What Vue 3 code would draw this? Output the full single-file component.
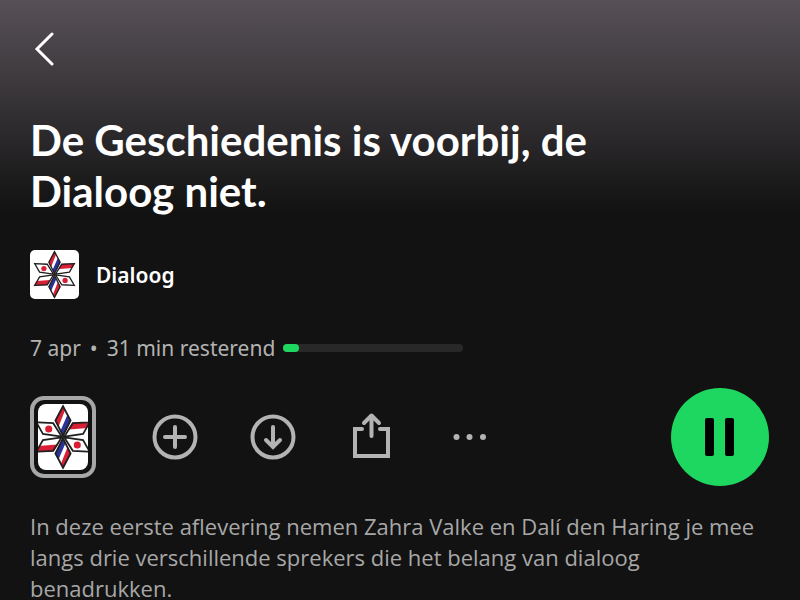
<script setup>
import { ref } from 'vue'

const playing = ref(true)
const progress = ref(9)
</script>

<template>
  <main class="episode">
    <svg class="sprites" aria-hidden="true">
      <defs>
        <clipPath id="petal-top"><path d="M74 3L92 37L74 72L56 37Z" /></clipPath>
        <clipPath id="petal-side"><path d="M136 40L95 42L76 73L119 67Z" /></clipPath>
        <g id="petals">
          <g clip-path="url(#petal-top)">
            <path fill="#fff" d="M50 0H100V80H50Z" />
            <path fill="#d91f35" d="M50 0H84L62 56H50Z" />
            <path fill="#29329b" d="M91 8L65 68V80H100V8Z" />
          </g>
          <g clip-path="url(#petal-side)">
            <path fill="#fff" d="M70 35H140V80H70Z" />
            <path fill="#d91f35" d="M80 35H140V53L80 58Z" />
          </g>
          <g class="outline">
            <path d="M74 5L91 37L74 71L57 37Z" />
            <path d="M134 41L96 43L77 73L119 67Z" />
            <path d="M14 41L52 43L71 73L29 67Z" />
          </g>
          <circle cx="42" cy="56" r="8" fill="#d91f35" />
        </g>
        <symbol id="star" viewBox="0 0 148 148">
          <use href="#petals" />
          <use href="#petals" transform="rotate(180 74 74)" />
        </symbol>
      </defs>
    </svg>

    <button class="back" aria-label="Terug">
      <svg width="20" height="34" viewBox="0 0 20 34">
        <path d="M18 2L3 17L18 32" />
      </svg>
    </button>

    <h1 class="title">De Geschiedenis is voorbij, de Dialoog niet.</h1>

    <a class="show" href="#">
      <svg class="cover"><use href="#star" /></svg>
      <span>Dialoog</span>
    </a>

    <div class="meta">
      <span>7 apr</span>
      <span class="dot">•</span>
      <span>31 min resterend</span>
      <div class="track">
        <div class="bar" :style="{ width: progress + '%' }"></div>
      </div>
    </div>

    <div class="actions">
      <button class="preview" aria-label="Voorbeeld">
        <svg viewBox="12 0 124 148" preserveAspectRatio="xMidYMid slice"><use href="#star" width="148" height="148" /></svg>
      </button>
      <button aria-label="Toevoegen">
        <svg class="icon" width="46" height="46" viewBox="0 0 46 46">
          <circle cx="23" cy="23" r="20.5" />
          <path d="M23 13V33M13 23H33" />
        </svg>
      </button>
      <button aria-label="Downloaden">
        <svg class="icon" width="46" height="46" viewBox="0 0 46 46">
          <circle cx="23" cy="23" r="20.5" />
          <path d="M23 13V33M16 26L23 33L30 26" />
        </svg>
      </button>
      <button aria-label="Delen">
        <svg class="icon share" width="46" height="46" viewBox="0 0 46 46">
          <path d="M14 15H7V42H40V15H32" />
          <path class="arrow" d="M23.5 22V2M16 9L23.5 1.5L31 9" />
        </svg>
      </button>
      <button aria-label="Meer">
        <svg class="more" width="46" height="46" viewBox="0 0 46 46">
          <circle cx="10.5" cy="23" r="3" />
          <circle cx="23.5" cy="23" r="3" />
          <circle cx="37" cy="23" r="3" />
        </svg>
      </button>
      <button class="play" :aria-label="playing ? 'Pauzeren' : 'Afspelen'" @click="playing = !playing">
        <svg width="98" height="98" viewBox="0 0 98 98">
          <template v-if="playing">
            <rect x="34" y="30" width="9" height="38" rx="2" />
            <rect x="54" y="30" width="9" height="38" rx="2" />
          </template>
          <path v-else d="M38 30L68 49L38 68Z" />
        </svg>
      </button>
    </div>

    <p class="description">
      In deze eerste aflevering nemen Zahra Valke en Dalí den Haring je mee langs drie verschillende
      sprekers die het belang van dialoog benadrukken.
    </p>
  </main>
</template>

<style>
body {
  background: #121212;
}
</style>

<style scoped>
.episode {
  box-sizing: border-box;
  min-height: 100vh;
  padding: 32px 31px 0 30px;
  background: linear-gradient(#575157, #121212 212px);
  color: #fff;
  font-family: 'Noto Sans', sans-serif;
}
.sprites {
  position: absolute;
  width: 0;
  height: 0;
}
.outline {
  fill: none;
  stroke: #211f20;
  stroke-width: 4;
}
button {
  display: block;
  padding: 0;
  border: 0;
  background: none;
}
svg {
  display: block;
}
.back {
  padding-left: 4px;
}
.back svg {
  fill: none;
  stroke: #fff;
  stroke-width: 3;
  stroke-linecap: round;
}
.title {
  margin: 49px 0 0;
  max-width: 600px;
  font-family: Lato, sans-serif;
  font-size: 42px;
  line-height: 51px;
  font-weight: 700;
}
.show {
  display: flex;
  align-items: center;
  gap: 17px;
  margin-top: 33px;
  color: #fff;
  font-size: 21px;
  line-height: 28px;
  font-weight: 600;
  text-decoration: none;
}
.cover {
  width: 49px;
  height: 49px;
  border-radius: 5px;
  background: #fff;
}
.meta {
  display: flex;
  align-items: center;
  margin-top: 33px;
  color: #b3b3b3;
  font-size: 21px;
  line-height: 32px;
}
.dot {
  margin: 0 9px;
}
.track {
  width: 180px;
  height: 8px;
  margin-left: 8px;
  border-radius: 4px;
  background: #282828;
}
.bar {
  height: 8px;
  border-radius: 4px;
  background: #1ed760;
}
.actions {
  display: flex;
  align-items: center;
  gap: 52px;
  margin-top: 24px;
}
.preview {
  box-sizing: border-box;
  width: 66px;
  height: 82px;
  margin-right: 4px;
  padding: 4px;
  border: 4px solid #a7a7a7;
  border-radius: 14px;
}
.preview svg {
  width: 50px;
  height: 66px;
  border-radius: 8px;
  background: #fff;
}
.icon {
  fill: none;
  stroke: #b3b3b3;
  stroke-width: 4;
  stroke-linecap: round;
}
.share {
  overflow: visible;
}
.arrow {
  stroke-linejoin: round;
}
.more {
  fill: #b3b3b3;
}
.play {
  margin-left: auto;
  border-radius: 50%;
  background: #1ed760;
}
.description {
  margin: 25px 0 0;
  color: #a7a7a7;
  font-family: 'Open Sans', 'Noto Sans', sans-serif;
  font-size: 22px;
  line-height: 31px;
}
</style>
